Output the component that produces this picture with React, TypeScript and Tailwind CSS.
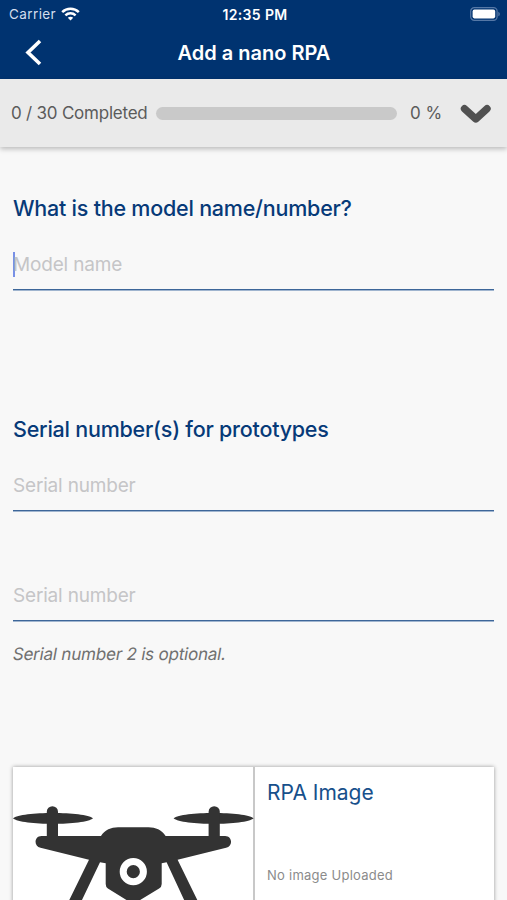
import type { ReactNode } from 'react';

function WifiIcon() {
  return (
    <svg className="mt-[-1px] ml-[5px] h-[14px] w-[19px]" viewBox="0 0 19 14" fill="none" stroke="white" strokeWidth="2.5">
      <path d="M1.2 5.2C5.8.7 13.2.7 17.8 5.2" />
      <path d="M4.4 8.3c2.9-2.8 7.3-2.8 10.2 0" />
      <path d="M9.5 13.4 6.8 10.7c1.5-1.4 3.9-1.4 5.4 0Z" fill="white" stroke="none" />
    </svg>
  );
}

function BatteryIcon() {
  return (
    <svg className="mt-[-1px] h-[14px] w-[31px]" viewBox="0 0 31 14">
      <rect x="0.7" y="0.7" width="26.4" height="12.6" rx="3.6" fill="none" stroke="#5578a6" strokeWidth="1.2" />
      <rect x="2.6" y="2.6" width="22.6" height="8.8" rx="1.8" fill="white" />
      <path d="M28.3 4.7c2 .8 2 3.8 0 4.6Z" fill="#5578a6" />
    </svg>
  );
}

function Drone() {
  return (
    <svg className="block h-[133px] w-[241px]" viewBox="0 0 241 133" fill="#333333">
      <path d="M0 51.3C8 44.2 72 44.2 80 51.3 72 58.8 8 58.8 0 51.3Z" />
      <path d="M160.6 51.3c8-7.1 72-7.1 80 0-8 7.5-72 7.5-80 0Z" />
      <path d="M33.8 71V44.8a5.6 5.6 0 0 1 11.2 0V71Z" />
      <path d="M195.6 71V44.8a5.6 5.6 0 0 1 11.2 0V71Z" />
      <path d="M28.5 69H88c4-6 10-8.7 17-8.7h30.6c7 0 13 2.7 17 8.7h59.5c7.5 0 8 10.4 1 11.8l-48.5 11.9 20.2 41.3h-13.2L153.6 95.3l-4.9 1V117q0 3-2.6 4.6L125.5 134h-10.4L94.9 121.6q-2.2-1.6-2.2-4.6V96.3L87 95.3 68.5 134H55.8L76 92.7 27.5 80.8c-7-1.4-6.5-11.8 1-11.8Z" />
      <circle cx="120.3" cy="104.7" r="10.1" fill="#333333" stroke="white" strokeWidth="7" />
    </svg>
  );
}

function Question({ children }: { children: ReactNode }) {
  return <h2 className="h-[30px] whitespace-nowrap text-[21.5px] leading-[30px] font-medium tracking-[-0.23px] text-[#073a78]">{children}</h2>;
}

function Field({ label, focused = false }: { label: string; focused?: boolean }) {
  return (
    <div className="flex h-[40px] items-start border-b border-[#3d6699] shadow-[0_1px_0_#a0b5cf]">
      {focused && <span className="mt-[2px] mr-[-2px] h-[25px] w-[2px] bg-[#7890e6]" />}
      <span className="whitespace-nowrap text-[19px] leading-[30px] tracking-[-0.18px] text-[#c5c5c7]">{label}</span>
    </div>
  );
}

export default function App() {
  return (
    <div className="flex h-[900px] w-[507px] flex-col overflow-hidden bg-[#f8f8f8] font-['Inter','Liberation_Sans',sans-serif]">
      <header className="h-[79px] shrink-0 bg-[#003370] text-white">
        <div className="grid h-[27px] grid-cols-3 items-center pr-[6px] pl-[9px]">
          <div className="flex items-center">
            <span className="text-[13.5px] leading-[29px] tracking-[0.4px] text-[#d3deed]">Carrier</span>
            <WifiIcon />
          </div>
          <span className="text-center text-[14px] leading-[29px] font-semibold tracking-[0.35px]">12:35 PM</span>
          <div className="flex justify-end"><BatteryIcon /></div>
        </div>
        <div className="grid h-[51px] grid-cols-[100px_1fr_100px] items-center">
          <svg className="ml-[24px] h-[28px] w-[20px]" viewBox="0 0 20 28" fill="none" stroke="white" strokeWidth="3.6">
            <path d="M16 2 4 13.5l12 11.5" />
          </svg>
          <h1 className="pl-px text-center text-[20px] leading-[50px] font-semibold">Add a nano RPA</h1>
        </div>
      </header>

      <section className="flex h-[68px] shrink-0 items-center bg-[#eaeaea] pl-[11px] text-[17px] text-[#5b5b5b] shadow-[0_2px_5px_rgba(0,0,0,0.25)]">
        <span className="mt-[2px] w-[145px] whitespace-nowrap tracking-[-0.22px]">0 / 30 Completed</span>
        <div className="h-[13px] w-[241px] rounded-full bg-[#c9c9c9]" />
        <span className="mt-[2px] ml-[13px] w-[50px] whitespace-nowrap">0 %</span>
        <svg className="mt-[1px] h-[20px] w-[32px]" viewBox="0 0 32 20" fill="none" stroke="#515151" strokeWidth="7.4" strokeLinecap="round" strokeLinejoin="round">
          <path d="M4.5 4.7 15.8 14.9 27 4.7" />
        </svg>
      </section>

      <main className="flex flex-1 flex-col px-[13px] pt-[46px]">
        <Question>What is the model name/number?</Question>
        <div className="mt-[27px]"><Field label="Model name" focused /></div>
        <div className="mt-[124px]"><Question>Serial number(s) for prototypes</Question></div>
        <div className="mt-[27px]"><Field label="Serial number" /></div>
        <div className="mt-[70px]"><Field label="Serial number" /></div>
        <p className="mt-[21px] mb-px h-[24px] origin-center -skew-x-[10deg] text-[17px] leading-[24px] tracking-[-0.2px] text-[#707070]">Serial number 2 is optional.</p>
        <section className="mt-[100px] flex h-[180px] shrink-0 bg-white shadow-[0_0_4px_rgba(0,0,0,0.4)]">
          <div className="w-[242px] border-r-2 border-[#c8c8c8]"><Drone /></div>
          <div className="flex flex-col pl-[12px]">
            <h3 className="mt-[11px] h-[30px] text-[21px] leading-[30px] text-[#17508b]">RPA Image</h3>
            <span className="mt-[57px] text-[13px] leading-[20px] tracking-[0.25px] text-[#8b8b8b]">No image Uploaded</span>
          </div>
        </section>
      </main>
    </div>
  );
}
